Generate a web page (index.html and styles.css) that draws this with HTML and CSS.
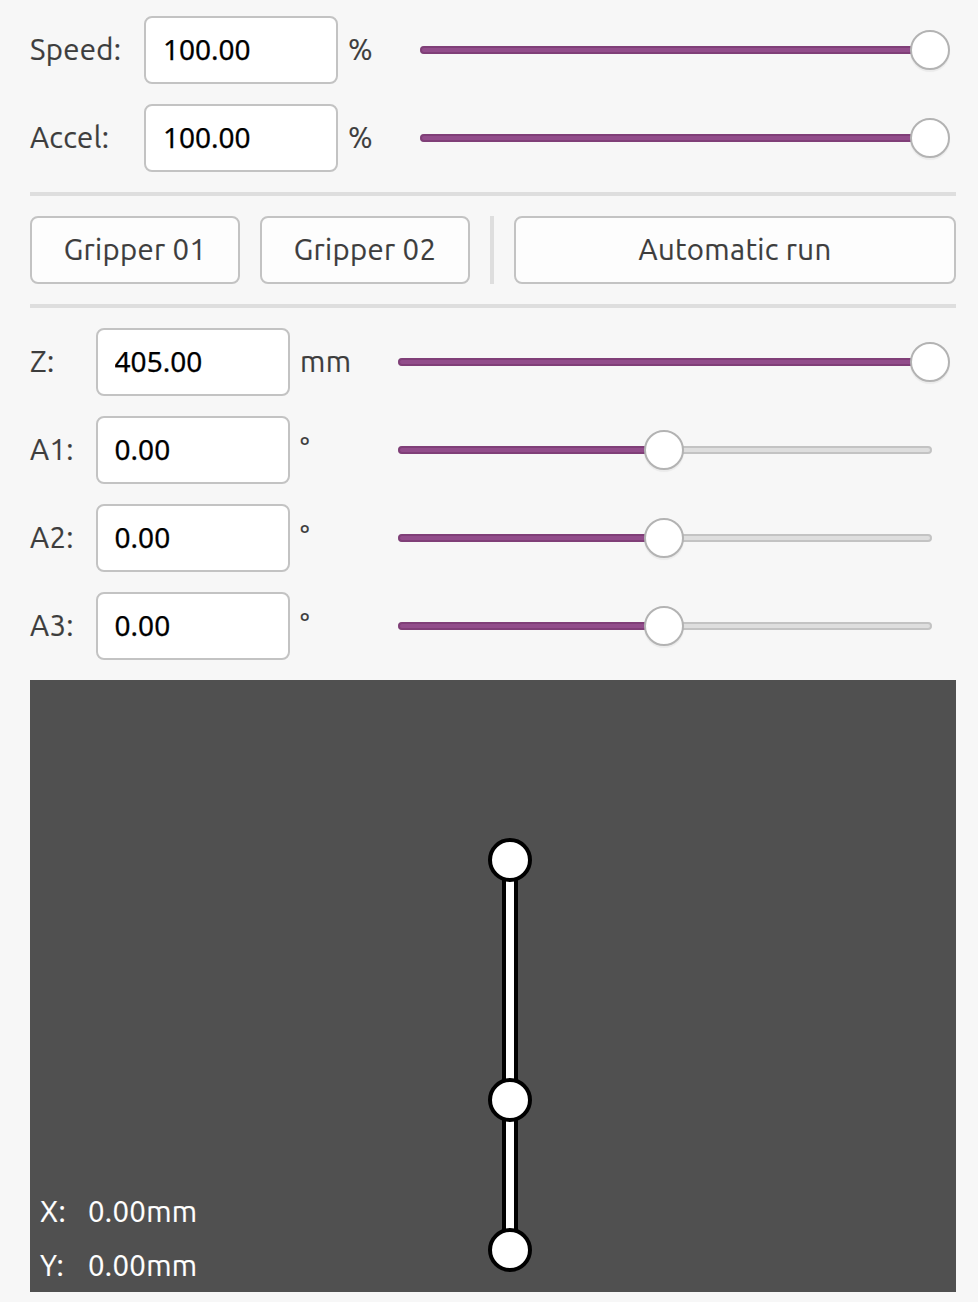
FILE: index.html
```
<!DOCTYPE html>
<html lang="en">
<head>
<meta charset="utf-8">
<title>Robot control</title>
<link rel="stylesheet" href="styles.css">
</head>
<body>
<main class="panel">
  <section class="controls rates">
    <label>Speed:</label><input class="field" value="100.00"><span class="unit">%</span>
    <div class="slider full"><div class="track"><div class="fill"></div></div><div class="handle"></div></div>
    <label>Accel:</label><input class="field" value="100.00"><span class="unit">%</span>
    <div class="slider full"><div class="track"><div class="fill"></div></div><div class="handle"></div></div>
  </section>
  <div class="rule"></div>
  <section class="actions">
    <button class="gripper">Gripper 01</button>
    <button class="gripper">Gripper 02</button>
    <div class="divider"></div>
    <button class="run">Automatic run</button>
  </section>
  <div class="rule"></div>
  <section class="controls axes">
    <label>Z:</label><input class="field" value="405.00"><span class="unit">mm</span>
    <div class="slider full"><div class="track"><div class="fill"></div></div><div class="handle"></div></div>
    <label>A1:</label><input class="field" value="0.00"><span class="unit">°</span>
    <div class="slider half"><div class="track"><div class="fill"></div></div><div class="handle"></div></div>
    <label>A2:</label><input class="field" value="0.00"><span class="unit">°</span>
    <div class="slider half"><div class="track"><div class="fill"></div></div><div class="handle"></div></div>
    <label>A3:</label><input class="field" value="0.00"><span class="unit">°</span>
    <div class="slider half"><div class="track"><div class="fill"></div></div><div class="handle"></div></div>
  </section>
  <section class="view">
    <svg class="arm" width="926" height="612" viewBox="0 0 926 612">
      <g fill="#fff" stroke="#000" stroke-width="4">
        <rect x="474" y="180" width="12" height="240"/>
        <rect x="474" y="420" width="12" height="150"/>
        <circle cx="480" cy="180" r="20"/>
        <circle cx="480" cy="420" r="20"/>
        <circle cx="480" cy="570" r="20"/>
      </g>
    </svg>
    <div class="readout">
      <span>X:</span><span class="value">0.00mm</span>
      <span>Y:</span><span class="value">0.00mm</span>
    </div>
  </section>
</main>
</body>
</html>
```
FILE: styles.css
```
* { box-sizing: border-box; }
body {
  margin: 0;
  background: #f7f7f7;
  color: #3d3d3d;
  font: 29.33px/40px "Ubuntu", "Noto Sans", sans-serif;
  letter-spacing: 0.33px;
  -webkit-text-stroke: 0.2px;
}
.panel {
  display: flex;
  flex-direction: column;
  gap: 20px;
  height: 1302px;
  padding: 16px 22px 10px 30px;
}
.controls { display: grid; grid-auto-rows: 68px; row-gap: 20px; align-items: center; }
.rates { grid-template-columns: 114px 194px 82px 512px; }
.axes { grid-template-columns: 66px 194px 108px 534px; }
.controls label, .unit { white-space: nowrap; }
.field {
  width: 194px;
  height: 68px;
  padding: 0 16px 3px 16.6px;
  border: 2px solid #c3c3c3;
  border-radius: 8px;
  background: #fff;
  color: #000;
  font: 28px "Noto Sans", sans-serif;
  -webkit-text-stroke: 0.25px;
}
.rates .field { padding-left: 17px; }
.unit { padding-left: 10px; }
.slider { position: relative; height: 40px; display: flex; align-items: center; }
.track {
  width: 100%;
  height: 8px;
  border: 2px solid #c3c3c3;
  border-radius: 4px;
  background: #dedede;
}
.fill {
  height: 8px;
  margin: -2px;
  border: 2px solid #803f78;
  border-radius: 4px;
  background: #924d8b;
}
.half .fill { width: 266px; }
.handle {
  position: absolute;
  top: 0;
  right: -18px;
  width: 40px;
  height: 40px;
  border: 2px solid #b3b3b3;
  border-radius: 50%;
  background: #fff;
  box-shadow: 0 2px 1px #0000000d;
}
.half .handle { left: 246px; right: auto; }
.rule { flex: none; height: 4px; background: #dedede; }
.actions { display: flex; height: 68px; gap: 20px; }
.actions button {
  height: 68px;
  padding: 0 0 1px;
  border: 2px solid #c3c3c3;
  border-radius: 8px;
  background: #fdfdfd;
  color: #3d3d3d;
  font: 29.33px "Ubuntu", "Noto Sans", sans-serif;
  letter-spacing: 0.35px;
  -webkit-text-stroke: 0.2px;
}
.actions .gripper { width: 210px; }
.actions .run { flex: 1; }
.divider { width: 4px; background: #dedede; }
.view { position: relative; flex: none; height: 612px; background: #505050; color: #fff; }
.arm { display: block; }
.readout {
  position: absolute;
  left: 10px;
  bottom: -1px;
  display: grid;
  grid-template-columns: 48px auto;
  grid-auto-rows: 54px;
  line-height: 54px;
}
```
